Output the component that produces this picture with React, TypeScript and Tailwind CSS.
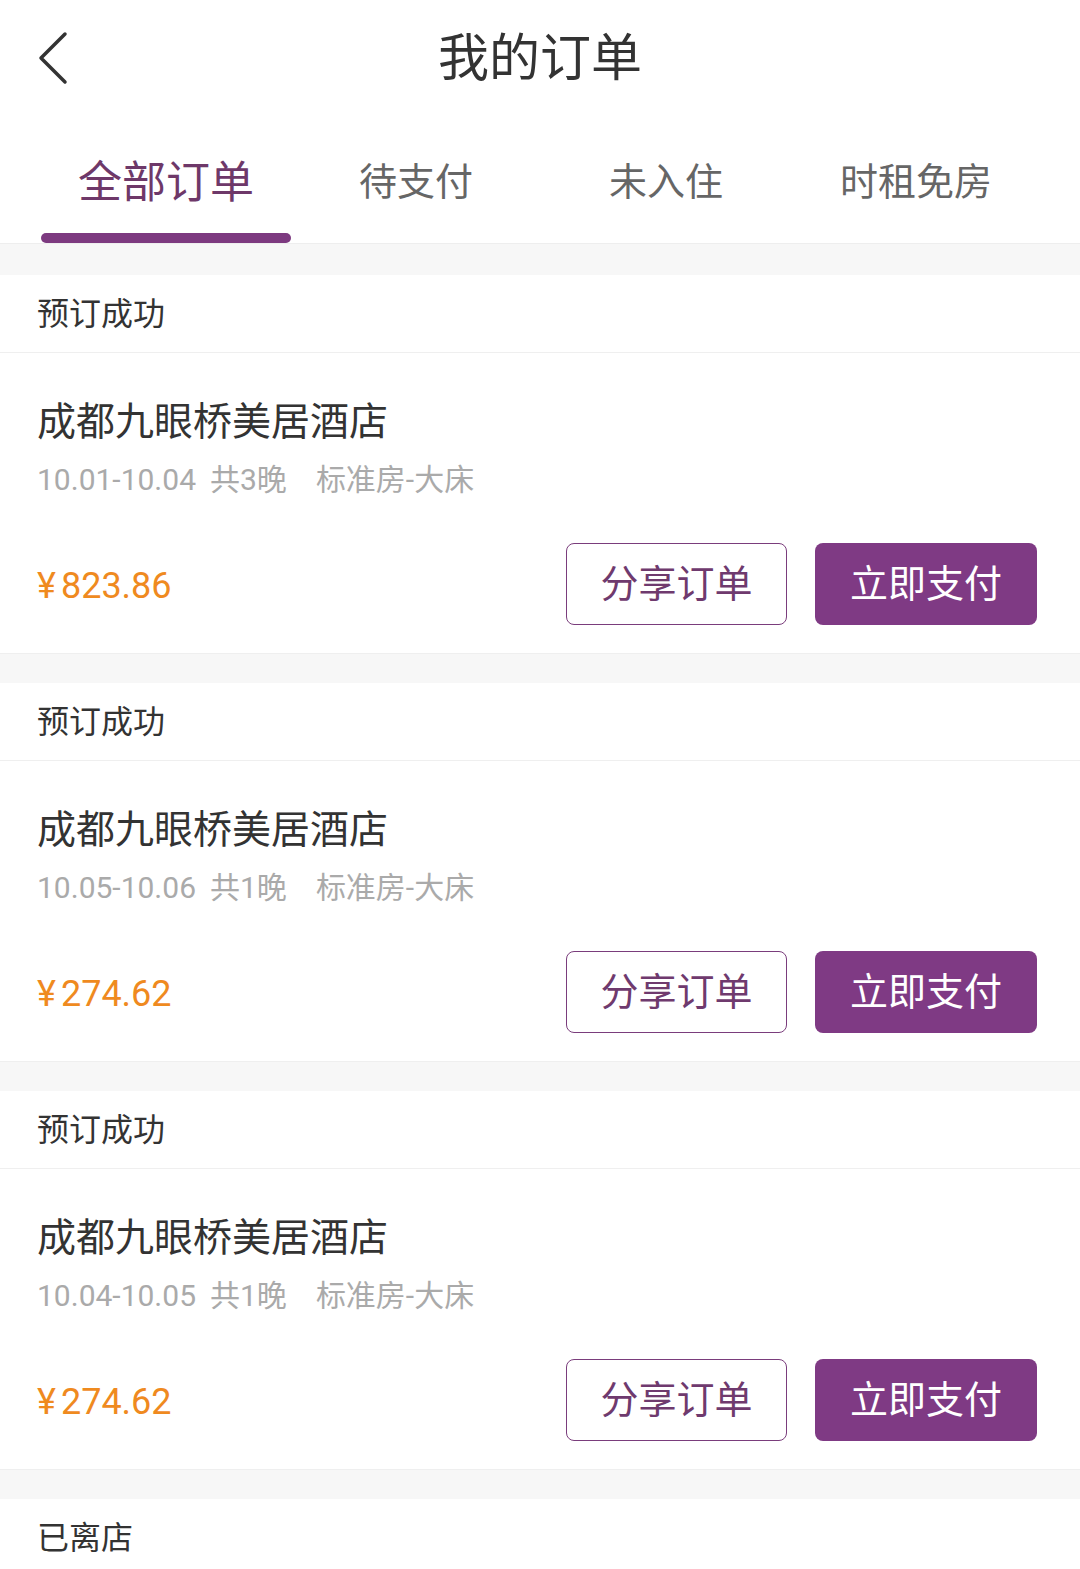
import React from "react";

const FONT = { fontFamily: "Roboto, 'Noto Sans CJK SC', 'Noto Sans', sans-serif" };

const orders = [
  { date: "10.01-10.04", nights: "共3晚", price: "823.86" },
  { date: "10.05-10.06", nights: "共1晚", price: "274.62" },
  { date: "10.04-10.05", nights: "共1晚", price: "274.62" },
];

const tabs = ["全部订单", "待支付", "未入住", "时租免房"];

function OrderCard({ date, nights, price }: { date: string; nights: string; price: string }) {
  return (
    <div className="bg-white border-b border-[#efefef]">
      <div className="h-[78px] flex items-center px-[37px] border-b border-[#efefef] text-[32px] text-[#333]">
        预订成功
      </div>
      <div className="pl-[37px] pr-[43px] pt-[45px] pb-[28px]">
        <div className="text-[39px] leading-[48px] text-[#333]">成都九眼桥美居酒店</div>
        <div className="mt-[14px] text-[30px] leading-[40px] text-[#aaa] flex">
          <span>{date}</span>
          <span className="ml-[14px]">{nights}</span>
          <span className="ml-[29px]">标准房-大床</span>
        </div>
        <div className="mt-[43px] flex items-center">
          <div className="text-[36px] leading-[44px] pt-[4px] text-[#ef8a1f] flex-1">
            <span className="mr-[5px]">¥</span>
            {price}
          </div>
          <div className="w-[221px] h-[82px] rounded-[8px] border border-[#7a3d7c] flex items-center justify-center text-[38px] text-[#6f3a6e]">
            分享订单
          </div>
          <div className="ml-[28px] w-[222px] h-[82px] rounded-[8px] bg-[#7f3a84] flex items-center justify-center text-[38px] text-white">
            立即支付
          </div>
        </div>
      </div>
    </div>
  );
}

export default function App() {
  return (
    <div className="w-[1080px] h-[1569px] overflow-hidden bg-[#f7f7f7]" style={FONT}>
      <div className="bg-white">
        <div className="relative h-[116px] flex items-center justify-center">
          <svg
            className="absolute left-[36px] top-[31px]"
            width="34"
            height="54"
            viewBox="0 0 34 54"
            fill="none"
          >
            <polyline points="29,3 5,27 29,51" stroke="#333" strokeWidth="3.5" strokeLinecap="round" strokeLinejoin="round" />
          </svg>
          <div className="text-[51px] text-[#333] leading-none">我的订单</div>
        </div>
        <div className="flex pl-[41px] border-b border-[#eeeeee]">
          {tabs.map((t, i) => (
            <div key={t} className="w-[250px] flex flex-col items-center pt-[41px]">
              <div
                className={
                  i === 0
                    ? "h-[50px] flex items-center text-[44px] pt-[2px] text-[#6e3869]"
                    : "h-[50px] flex items-center text-[38px] text-[#666]"
                }
              >
                {t}
              </div>
              <div
                className={
                  i === 0
                    ? "mt-[26px] h-[10px] w-full rounded-full bg-[#7d3a80]"
                    : "mt-[26px] h-[10px] w-full"
                }
              />
            </div>
          ))}
        </div>
      </div>
      <div className="h-[31px]" />
      <div className="flex flex-col gap-[29px]">
        {orders.map((o, i) => (
          <OrderCard key={i} {...o} />
        ))}
        <div className="bg-white">
          <div className="h-[78px] flex items-center px-[37px] text-[32px] text-[#333]">已离店</div>
        </div>
      </div>
    </div>
  );
}
